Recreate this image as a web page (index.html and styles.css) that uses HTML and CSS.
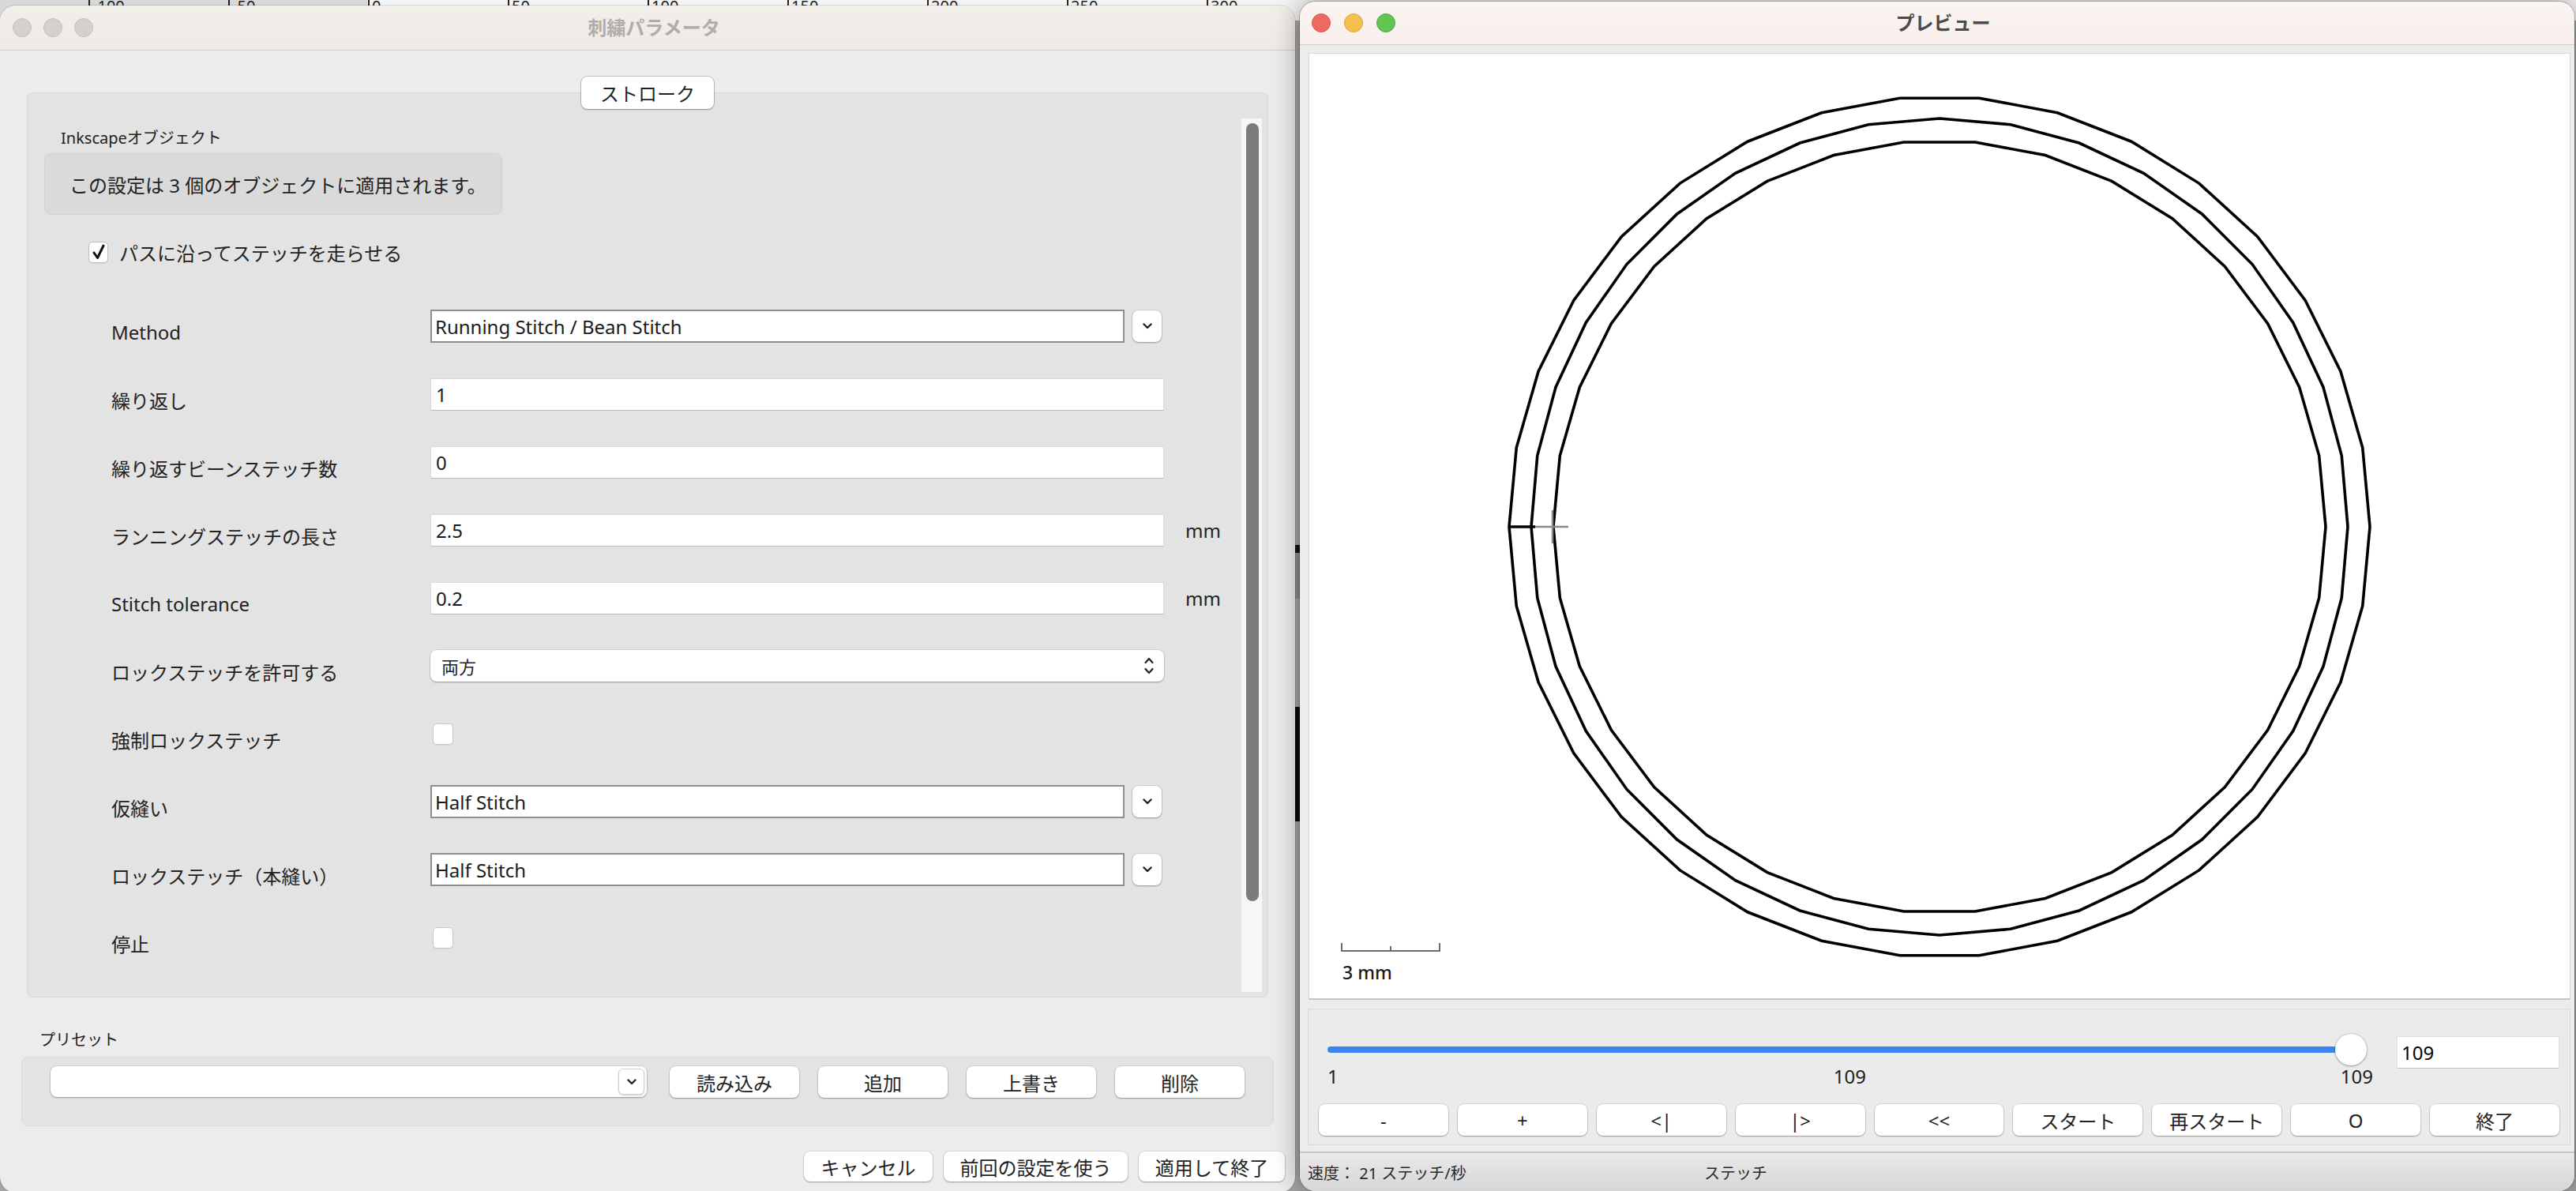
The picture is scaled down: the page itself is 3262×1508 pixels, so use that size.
FILE: index.html
```html
<!DOCTYPE html>
<html lang="ja">
<head>
<meta charset="utf-8">
<title>刺繍パラメータ / プレビュー</title>
<link rel="stylesheet" href="styles.css">
</head>
<body>
<div class="desktop">
  <div class="ruler">
    <span class="tick">-100</span>
    <span class="tick">-50</span>
    <span class="tick">0</span>
    <span class="tick">50</span>
    <span class="tick">100</span>
    <span class="tick">150</span>
    <span class="tick">200</span>
    <span class="tick">250</span>
    <span class="tick">300</span>
  </div>
  <div class="bg-mark mark-a"></div>
  <div class="bg-mark mark-b"></div>
  <div class="bg-mark mark-c"></div>

  <section class="window params-window">
    <header class="titlebar">
      <div class="lights"><span class="light"></span><span class="light"></span><span class="light"></span></div>
      <h1 class="title">刺繍パラメータ</h1>
      <span></span>
    </header>
    <div class="params-body">
      <div class="tab-row"><button class="btn tab">ストローク</button></div>
      <div class="notebook">
        <div class="scroll-content">
          <div class="frame-label">Inkscapeオブジェクト</div>
          <div class="info-box">この設定は 3 個のオブジェクトに適用されます。</div>
          <div class="check-row">
            <span class="box checked"><svg width="20" height="22" viewBox="0 0 20 22"><path d="M4 12 L8.5 18.5 L16 3" fill="none" stroke="#111" stroke-width="3" stroke-linecap="round" stroke-linejoin="round"/></svg></span>
            <span>パスに沿ってステッチを走らせる</span>
          </div>
          <div class="param-grid">
            <div class="param-row">
              <span class="param-label">Method</span>
              <div class="combo"><div class="entry framed">Running Stitch / Bean Stitch</div><div class="drop-btn"><svg width="12" height="8" viewBox="0 0 12 8"><path d="M1.5 1.5 L6 6 L10.5 1.5" fill="none" stroke="#222" stroke-width="2.4" stroke-linecap="round" stroke-linejoin="round"/></svg></div></div>
            </div>
            <div class="param-row">
              <span class="param-label">繰り返し</span>
              <div class="entry">1</div>
            </div>
            <div class="param-row">
              <span class="param-label">繰り返すビーンステッチ数</span>
              <div class="entry">0</div>
            </div>
            <div class="param-row">
              <span class="param-label">ランニングステッチの長さ</span>
              <div class="entry">2.5</div>
              <span class="unit">mm</span>
            </div>
            <div class="param-row">
              <span class="param-label">Stitch tolerance</span>
              <div class="entry">0.2</div>
              <span class="unit">mm</span>
            </div>
            <div class="param-row">
              <span class="param-label">ロックステッチを許可する</span>
              <div class="select"><span>両方</span><svg width="14" height="24" viewBox="0 0 14 24"><path d="M2.5 8 L7 3 L11.5 8 M2.5 16 L7 21 L11.5 16" fill="none" stroke="#222" stroke-width="2.2" stroke-linecap="round" stroke-linejoin="round"/></svg></div>
            </div>
            <div class="param-row">
              <span class="param-label">強制ロックステッチ</span>
              <span class="box"></span>
            </div>
            <div class="param-row">
              <span class="param-label">仮縫い</span>
              <div class="combo"><div class="entry framed">Half Stitch</div><div class="drop-btn"><svg width="12" height="8" viewBox="0 0 12 8"><path d="M1.5 1.5 L6 6 L10.5 1.5" fill="none" stroke="#222" stroke-width="2.4" stroke-linecap="round" stroke-linejoin="round"/></svg></div></div>
            </div>
            <div class="param-row">
              <span class="param-label">ロックステッチ（本縫い）</span>
              <div class="combo"><div class="entry framed">Half Stitch</div><div class="drop-btn"><svg width="12" height="8" viewBox="0 0 12 8"><path d="M1.5 1.5 L6 6 L10.5 1.5" fill="none" stroke="#222" stroke-width="2.4" stroke-linecap="round" stroke-linejoin="round"/></svg></div></div>
            </div>
            <div class="param-row">
              <span class="param-label">停止</span>
              <span class="box"></span>
            </div>
          </div>
        </div>
        <div class="scrollbar"><div class="thumb"></div></div>
      </div>
      <div class="preset-label">プリセット</div>
      <div class="preset-box">
        <div class="preset-combo"><div class="mini-btn"><svg width="12" height="8" viewBox="0 0 12 8"><path d="M1.5 1.5 L6 6 L10.5 1.5" fill="none" stroke="#222" stroke-width="2.4" stroke-linecap="round" stroke-linejoin="round"/></svg></div></div>
        <div class="preset-buttons">
          <button class="btn preset">読み込み</button>
          <button class="btn preset">追加</button>
          <button class="btn preset">上書き</button>
          <button class="btn preset">削除</button>
        </div>
      </div>
      <div class="dialog-buttons">
        <button class="btn dlg w-cancel">キャンセル</button>
        <button class="btn dlg w-prev">前回の設定を使う</button>
        <button class="btn dlg w-apply">適用して終了</button>
      </div>
    </div>
  </section>

  <section class="window preview-window">
    <header class="titlebar">
      <div class="lights"><span class="light red"></span><span class="light yellow"></span><span class="light green"></span></div>
      <h1 class="title">プレビュー</h1>
      <span></span>
    </header>
    <div class="preview-body">
      <div class="canvas">
        <svg class="drawing" width="1597" height="1196" viewBox="0 0 1597 1196">
          <g fill="none" stroke="#000" stroke-width="3.6" stroke-linejoin="miter">
            <polygon vector-effect="non-scaling-stroke" transform="translate(798 599) scale(0.545)" points="92,-996 274,-962 446,-895 603,-798 739,-674 850,-526 932,-361 983,-184 1000,0 983,184 932,361 850,526 739,674 603,798 446,895 274,962 92,996 -92,996 -274,962 -446,895 -603,798 -739,674 -850,526 -932,361 -983,184 -1000,0 -983,-184 -932,-361 -850,-526 -739,-674 -603,-798 -446,-895 -274,-962 -92,-996"/>
            <polygon vector-effect="non-scaling-stroke" transform="translate(798 599) scale(0.517)" points="0,-1000 174,-985 342,-940 500,-866 643,-766 766,-643 866,-500 940,-342 985,-174 1000,0 985,174 940,342 866,500 766,643 643,766 500,866 342,940 174,985 0,1000 -174,985 -342,940 -500,866 -643,766 -766,643 -866,500 -940,342 -985,174 -1000,0 -985,-174 -940,-342 -866,-500 -766,-643 -643,-766 -500,-866 -342,-940 -174,-985"/>
            <polygon vector-effect="non-scaling-stroke" transform="translate(798 599) scale(0.489)" points="92,-996 274,-962 446,-895 603,-798 739,-674 850,-526 932,-361 983,-184 1000,0 983,184 932,361 850,526 739,674 603,798 446,895 274,962 92,996 -92,996 -274,962 -446,895 -603,798 -739,674 -850,526 -932,361 -983,184 -1000,0 -983,-184 -932,-361 -850,-526 -739,-674 -603,-798 -446,-895 -274,-962 -92,-996"/>
            <path d="M253 599 H286"/>
          </g>
          <path d="M286 599 H328 M308 578 V620" stroke="#8a8a8a" stroke-width="2.5" fill="none"/>
          <path d="M41 1126 V1136 H165 V1126 M103 1130 V1136" stroke="#6a6a6a" stroke-width="2" fill="none"/>
          <text x="42" y="1172" class="scale-text">3 mm</text>
        </svg>
      </div>
      <div class="slider-panel">
        <div class="slider-grid">
          <div class="slider"><div class="track"></div><div class="knob"></div></div>
          <div class="entry value">109</div>
          <div class="slider-labels"><span>1</span><span class="mid">109</span><span>109</span></div>
        </div>
        <div class="controls">
          <button class="btn ctl">-</button>
          <button class="btn ctl">+</button>
          <button class="btn ctl">&lt;|</button>
          <button class="btn ctl">|&gt;</button>
          <button class="btn ctl">&lt;&lt;</button>
          <button class="btn ctl">スタート</button>
          <button class="btn ctl">再スタート</button>
          <button class="btn ctl">O</button>
          <button class="btn ctl">終了</button>
        </div>
      </div>
      <div class="statusbar">
        <span class="status-speed">速度： 21 ステッチ/秒</span>
        <span>ステッチ</span>
      </div>
    </div>
  </section>
</div>
</body>
</html>
```

FILE: styles.css
```css
* { box-sizing: border-box; }
html, body { margin: 0; padding: 0; }
body {
  width: 3262px;
  height: 1508px;
  overflow: hidden;
  font-family: "Noto Sans", "Noto Sans CJK JP", sans-serif;
  color: #222;
  background: #a6a6a6;
}
.desktop {
  position: relative;
  width: 3262px;
  height: 1508px;
  overflow: hidden;
  background: #a4a4a4;
}

/* background inkscape ruler */
.ruler {
  display: flex;
  height: 26px;
  padding-left: 112px;
  background: linear-gradient(90deg, #d8d8d8 0, #d8d8d8 465px, #f4f4f4 465px);
}
.tick {
  flex: 0 0 177px;
  height: 16px;
  border-left: 2px solid #222;
  padding-left: 3px;
  font-size: 20px;
  line-height: 16px;
  color: #222;
  overflow: hidden;
}
.bg-mark { position: absolute; left: 1636px; width: 12px; }
.mark-a { top: 690px; height: 10px; background: #111; }
.mark-b { top: 700px; height: 58px; background: #8d8a88; }
.mark-c { top: 895px; height: 145px; background: #0a0a0a; }

/* windows */
.window {
  position: absolute;
  display: flex;
  flex-direction: column;
  border-radius: 20px;
  overflow: hidden;
  background: #ececec;
}
.params-window {
  left: 0;
  top: 7px;
  width: 1640px;
  height: 1503px;
  box-shadow: 0 0 0 1px rgba(0,0,0,0.12);
}
.preview-window {
  left: 1646px;
  top: 2px;
  width: 1614px;
  height: 1506px;
  box-shadow: 0 0 0 1px rgba(0,0,0,0.22), 0 0 34px rgba(0,0,0,0.38);
}

.titlebar {
  flex: none;
  height: 57px;
  display: grid;
  grid-template-columns: 1fr auto 1fr;
  align-items: center;
  padding-left: 16px;
  border-bottom: 1px solid #d2cdc9;
  background: linear-gradient(#f2eeea, #eeeae6);
}
.preview-window .titlebar {
  height: 55px;
  padding-left: 15px;
  background: linear-gradient(#fbf4f1, #f8efec);
  border-bottom: 1px solid #d3cbc8;
}
.lights { display: flex; gap: 15px; }
.preview-window .lights { gap: 17px; }
.light {
  width: 24px;
  height: 24px;
  border-radius: 50%;
  background: #d4d0cd;
  border: 1px solid #c3bfbc;
}
.light.red { background: #ee6a5f; border-color: #d85a50; }
.light.yellow { background: #f6be4f; border-color: #dca33c; }
.light.green { background: #61c554; border-color: #4fab42; }
.title {
  margin: 0;
  font-size: 24px;
  font-weight: 700;
  color: #b1aca8;
  line-height: 1;
}
.preview-window .title { color: #4b4b4b; }

/* generic button */
.btn {
  display: flex;
  align-items: center;
  justify-content: center;
  padding: 0;
  border: none;
  border-radius: 8px;
  background: #fff;
  font-family: inherit;
  font-size: 24px;
  color: #222;
  box-shadow: 0 0 0 1px rgba(0,0,0,0.07), 0 1px 2px rgba(0,0,0,0.3);
}

/* params dialog */
.params-body {
  flex: 1;
  padding: 33px 27px 0;
}
.tab-row {
  position: relative;
  z-index: 1;
  display: flex;
  justify-content: center;
}
.tab {
  width: 168px;
  height: 41px;
  box-shadow: 0 0 0 1px rgba(0,0,0,0.16), 0 1px 2px rgba(0,0,0,0.25);
}
.notebook {
  display: flex;
  height: 1146px;
  margin: -21px 7px 0;
  background: #e3e3e3;
  border: 1px solid #d7d7d7;
  border-radius: 8px;
}
.scroll-content {
  flex: 1;
  padding-top: 43px;
}
.frame-label {
  padding-left: 42px;
  font-size: 20px;
  line-height: 28px;
}
.info-box {
  display: flex;
  align-items: center;
  width: 580px;
  height: 78px;
  margin: 5px 0 0 21px;
  padding-left: 31px;
  background: #dadada;
  border: 1px solid #d2d2d2;
  border-radius: 8px;
  font-size: 24px;
  white-space: pre;
}
.check-row {
  display: flex;
  align-items: center;
  gap: 14px;
  height: 40px;
  margin-top: 27px;
  padding-left: 77px;
  font-size: 24px;
}
.box {
  display: flex;
  align-items: center;
  justify-content: center;
  width: 26px;
  height: 27px;
  margin-left: 3px;
  background: #fff;
  border: 1px solid #c8c8c8;
  border-radius: 5px;
  box-shadow: 0 1px 1px rgba(0,0,0,0.06);
}
.box.checked { width: 25px; margin-left: 0; border-color: #bdbdbd; }

.param-grid {
  margin-top: 31px;
  padding-left: 106px;
}
.param-row {
  display: grid;
  grid-template-columns: 404px 929px auto;
  align-items: center;
  height: 86px;
}
.param-label {
  font-size: 24px;
  padding-top: 14px;
}
.entry {
  display: flex;
  align-items: center;
  height: 41px;
  padding: 0 6px;
  background: #fff;
  border: 1px solid #d9d9d9;
  border-bottom-color: #bcbcbc;
  font-size: 24px;
  color: #1a1a1a;
}
.combo {
  display: flex;
  align-items: center;
  gap: 10px;
  margin-right: 3px;
}
.entry.framed {
  flex: 1;
  height: 42px;
  padding-left: 4px;
  border: 2px solid #8e8e8e;
}
.drop-btn {
  display: flex;
  align-items: center;
  justify-content: center;
  width: 37px;
  height: 40px;
  background: #fff;
  border-radius: 8px;
  box-shadow: 0 0 0 1px rgba(0,0,0,0.08), 0 1px 2px rgba(0,0,0,0.3);
}
.select {
  display: flex;
  align-items: center;
  justify-content: space-between;
  height: 40px;
  padding: 0 12px 0 14px;
  background: #fff;
  border-radius: 8px;
  font-size: 22px;
  box-shadow: 0 0 0 1px rgba(0,0,0,0.07), 0 1px 2px rgba(0,0,0,0.3);
}
.unit {
  padding-left: 27px;
  font-size: 24px;
}
.scrollbar {
  width: 26px;
  margin: 32px 7px 6px 0;
  padding: 6px 4px 0 6px;
  background: #f6f6f6;
}
.thumb {
  height: 985px;
  border-radius: 8px;
  background: #7b7b7b;
}
.preset-label {
  margin-top: 40px;
  padding-left: 23px;
  font-size: 20px;
  line-height: 28px;
}
.preset-box {
  display: flex;
  align-items: flex-start;
  height: 88px;
  margin-top: 7px;
  padding: 11px 0 0 36px;
  background: #e3e3e3;
  border: 1px solid #d9d9d9;
  border-radius: 8px;
}
.preset-combo {
  display: flex;
  align-items: center;
  justify-content: flex-end;
  width: 755px;
  height: 39px;
  margin-right: 29px;
  padding-right: 3px;
  background: #fff;
  border-radius: 8px;
  box-shadow: 0 0 0 1px rgba(0,0,0,0.07), 0 1px 2px rgba(0,0,0,0.3);
}
.mini-btn {
  display: flex;
  align-items: center;
  justify-content: center;
  width: 33px;
  height: 33px;
  background: #fff;
  border: 1px solid #d0d0d0;
  border-radius: 6px;
  box-shadow: 0 1px 2px rgba(0,0,0,0.2);
}
.preset-buttons { display: flex; gap: 24px; }
.btn.preset { width: 164px; height: 40px; }
.dialog-buttons {
  display: flex;
  justify-content: flex-end;
  gap: 14px;
  margin: 32px -14px 0 0;
}
.btn.dlg { height: 38px; }
.w-cancel { width: 163px; }
.w-prev { width: 233px; }
.w-apply { width: 185px; }

/* preview window */
.preview-body {
  flex: 1;
  display: flex;
  flex-direction: column;
  padding: 0 5px 0 10px;
}
.canvas {
  height: 1199px;
  margin: 10px 0 0 1px;
  background: #fff;
  border: 1px solid #d6d6d6;
  border-bottom: 2px solid #c4c4c4;
  overflow: hidden;
}
.drawing { display: block; }
.scale-text {
  font-family: "Noto Sans", sans-serif;
  font-size: 23px;
  font-weight: 500;
  fill: #1a1a1a;
}
.slider-panel {
  height: 173px;
  margin-top: 11px;
  padding: 31px 13px 0;
  background: #ebebeb;
  border: 1px solid #dadada;
}
.slider-grid {
  display: grid;
  grid-template-columns: 1fr 206px;
  column-gap: 38px;
}
.slider {
  display: flex;
  align-items: center;
  height: 40px;
  margin-left: 11px;
}
.track {
  flex: 1;
  height: 8px;
  border-radius: 4px;
  background: #3c84f0;
}
.knob {
  width: 40px;
  height: 40px;
  margin-left: -2px;
  border-radius: 50%;
  background: #fff;
  box-shadow: 0 0 0 1px rgba(0,0,0,0.1), 0 1px 3px rgba(0,0,0,0.3);
}
.entry.value {
  margin-top: 3px;
  border-color: #dedede;
  border-bottom-color: #c4c4c4;
  padding-left: 5px;
  color: #000;
}
.slider-labels {
  display: flex;
  justify-content: space-between;
  margin: -2px -8px 0 11px;
  font-size: 24px;
  line-height: 24px;
  color: #222;
}
.slider-labels .mid { margin-left: 26px; }
.controls {
  display: grid;
  grid-template-columns: repeat(9, 1fr);
  gap: 12px;
  margin-top: 23px;
}
.btn.ctl { height: 40px; }
.statusbar {
  flex: 1;
  display: flex;
  align-items: center;
  margin: 8px -5px 0 -10px;
  padding-left: 10px;
  border-top: 2px solid #c6c6c6;
  background: linear-gradient(#e9e9e9, #d6d6d6);
  font-size: 20px;
  color: #2a2a2a;
}
.status-speed { width: 502px; }
```
